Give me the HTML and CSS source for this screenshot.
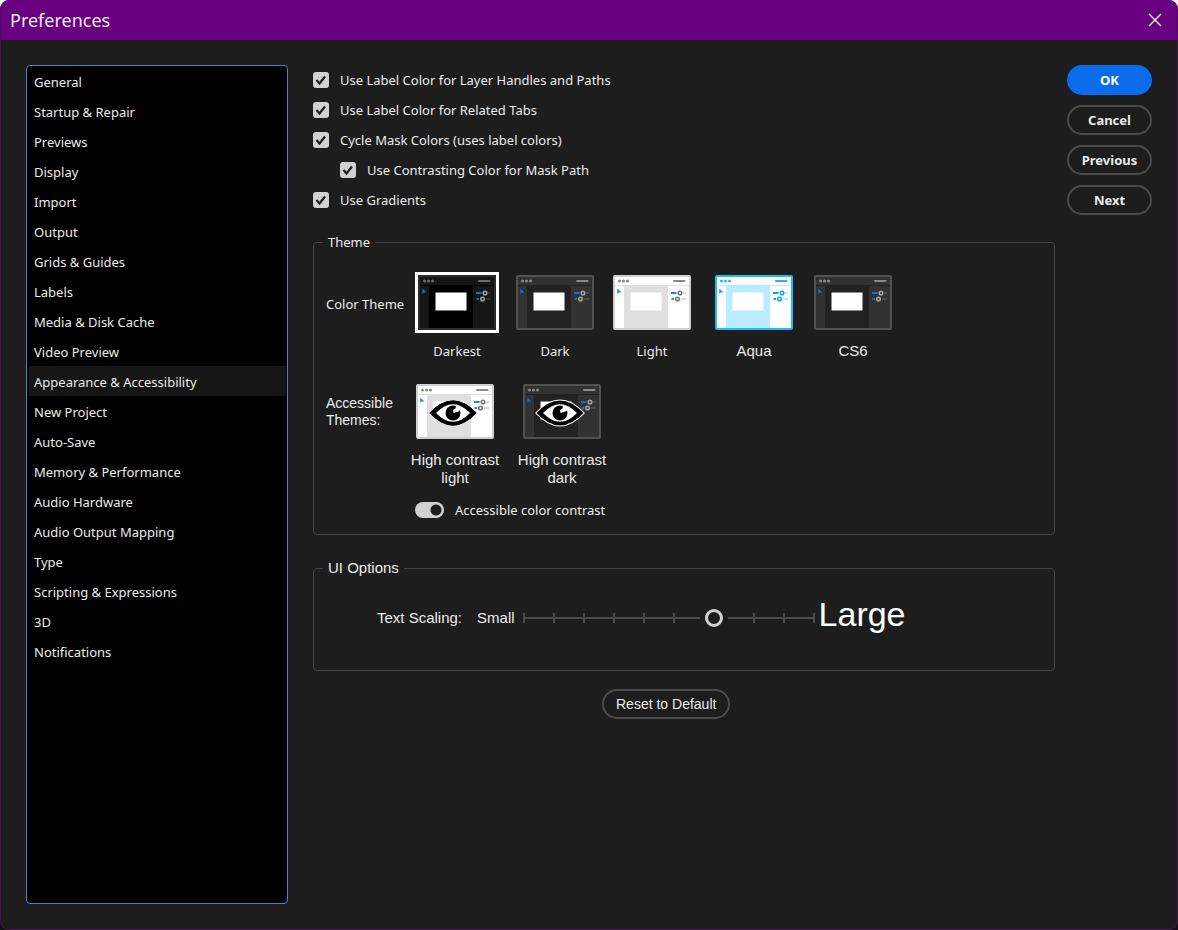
FILE: index.html
```html
<!DOCTYPE html>
<html lang="en">
<head>
    <meta charset="UTF-8">
    <meta name="viewport" content="width=device-width, initial-scale=1.0">
    <title>Preferences</title>
    <link rel="stylesheet" href="styles.css">
</head>
<body>

    <!-- shared drawings, coloured by the theme-* classes -->
    <svg class="defs" width="0" height="0" aria-hidden="true">
        <symbol id="preview" viewBox="0 0 78 55">
            <rect class="p-frame" x="1" y="1" width="76" height="53" rx="1" stroke-width="2"/>
            <rect class="p-canvas" x="11" y="11" width="44" height="42"/>
            <path class="p-split" d="M2 10.5h74"/>
            <g class="p-dots">
                <circle cx="6.500" cy="6" r="1.500"/>
                <circle cx="10.500" cy="6" r="1.500"/>
                <circle cx="14.500" cy="6" r="1.500"/>
                <rect x="60" y="5" width="12.500" height="2" rx="1"/>
                <rect x="70" y="17.500" width="3" height="1" opacity=".6"/>
                <rect x="68" y="23.500" width="5" height="1" opacity=".6"/>
            </g>
            <rect class="p-page" x="17" y="17" width="32" height="19" stroke-width="1"/>
            <g class="p-blue">
                <path d="M4.300 13.500v5.500l1.500-1.500h2.700z"/>
                <rect x="58" y="17" width="5.500" height="2"/>
                <rect x="58.500" y="23" width="2.500" height="2"/>
            </g>
            <circle class="p-knob" cx="67" cy="18" r="1.800"/>
            <circle class="p-knob" cx="64.500" cy="24" r="1.800"/>
        </symbol>
        <symbol id="eye" viewBox="0 0 78 55">
            <path class="eye-halo" d="M13.500 29q23.500-25 47 0q-23.500 25-47 0z"/>
            <path fill="#000" d="M13.500 29q23.500-25 47 0q-23.500 25-47 0z"/>
            <path fill="#fff" d="M20 29q17-17.500 34 0q-17 17.500-34 0z"/>
            <circle cx="37" cy="29" r="7.500"/>
            <path fill="#fff" d="M37.500 29l-.5-3 2.500-1.500.5-4 5.500 4.500-3 2.500z"/>
        </symbol>
        <symbol id="tick" viewBox="0 0 16 16">
            <path d="M3.500 8l3 3.500L12 4.500" fill="none" stroke="#1d1d1d" stroke-width="2.200"/>
        </symbol>
    </svg>

    <div class="dialog">
        <header class="titlebar">
            <h1>Preferences</h1>
            <button class="close" type="button" aria-label="Close">
                <svg width="14" height="14" viewBox="0 0 14 14"><path d="M1 1l12 12M13 1L1 13" stroke="#fff" stroke-width="1.300"/></svg>
            </button>
        </header>

        <div class="content">
            <nav class="sidebar">
                <a href="#">General</a>
                <a href="#">Startup &amp; Repair</a>
                <a href="#">Previews</a>
                <a href="#">Display</a>
                <a href="#">Import</a>
                <a href="#">Output</a>
                <a href="#">Grids &amp; Guides</a>
                <a href="#">Labels</a>
                <a href="#">Media &amp; Disk Cache</a>
                <a href="#">Video Preview</a>
                <a href="#" class="selected" aria-current="page">Appearance &amp; Accessibility</a>
                <a href="#">New Project</a>
                <a href="#">Auto-Save</a>
                <a href="#">Memory &amp; Performance</a>
                <a href="#">Audio Hardware</a>
                <a href="#">Audio Output Mapping</a>
                <a href="#">Type</a>
                <a href="#">Scripting &amp; Expressions</a>
                <a href="#">3D</a>
                <a href="#">Notifications</a>
            </nav>

            <main class="panel">
                <div class="options">
                    <label class="option"><span class="check"><input type="checkbox" checked><svg><use href="#tick"/></svg></span>Use Label Color for Layer Handles and Paths</label>
                    <label class="option"><span class="check"><input type="checkbox" checked><svg><use href="#tick"/></svg></span>Use Label Color for Related Tabs</label>
                    <label class="option"><span class="check"><input type="checkbox" checked><svg><use href="#tick"/></svg></span>Cycle Mask Colors (uses label colors)</label>
                    <label class="option nested"><span class="check"><input type="checkbox" checked><svg><use href="#tick"/></svg></span>Use Contrasting Color for Mask Path</label>
                    <label class="option"><span class="check"><input type="checkbox" checked><svg><use href="#tick"/></svg></span>Use Gradients</label>
                </div>

                <fieldset class="group theme-group">
                    <legend>Theme</legend>
                    <div class="theme-row">
                        <span class="row-name">Color Theme</span>
                        <div class="themes">
                            <label class="theme theme-darkest"><input type="radio" name="theme" checked><svg class="preview"><use href="#preview"/></svg>Darkest</label>
                            <label class="theme theme-dark"><input type="radio" name="theme"><svg class="preview"><use href="#preview"/></svg>Dark</label>
                            <label class="theme theme-light"><input type="radio" name="theme"><svg class="preview"><use href="#preview"/></svg>Light</label>
                            <label class="theme theme-aqua arial"><input type="radio" name="theme"><svg class="preview"><use href="#preview"/></svg>Aqua</label>
                            <label class="theme theme-dark arial"><input type="radio" name="theme"><svg class="preview"><use href="#preview"/></svg>CS6</label>
                        </div>
                    </div>
                    <div class="theme-row accessible">
                        <span class="row-name">Accessible Themes:</span>
                        <div class="themes arial">
                            <label class="theme theme-light"><input type="radio" name="theme"><svg class="preview"><use href="#preview"/><use href="#eye"/></svg>High contrast<br>light</label>
                            <label class="theme theme-dark"><input type="radio" name="theme"><svg class="preview"><use href="#preview"/><use href="#eye"/></svg>High contrast<br>dark</label>
                        </div>
                    </div>
                    <label class="switch-row">
                        <input class="switch" type="checkbox" role="switch" checked>
                        Accessible color contrast
                    </label>
                </fieldset>

                <fieldset class="group ui-group arial">
                    <legend>UI Options</legend>
                    <div class="scaling">
                        <label for="scale">Text Scaling:</label>
                        <span class="small">Small</span>
                        <div class="slider">
                            <svg width="292" height="12" viewBox="0 0 292 12"><path d="M1 6h290M1 1v10M31 1v10M61 1v10M91 1v10M121 1v10M151 1v10M231 1v10M261 1v10M291 1v10" stroke="#4b4b4b" stroke-width="2"/></svg>
                            <input id="scale" type="range" min="0" max="29" value="19">
                        </div>
                        <span class="large">Large</span>
                    </div>
                </fieldset>

                <button class="btn reset" type="button">Reset to Default</button>
            </main>

            <div class="actions">
                <button class="btn primary" type="button">OK</button>
                <button class="btn" type="button">Cancel</button>
                <button class="btn" type="button">Previous</button>
                <button class="btn" type="button">Next</button>
            </div>
        </div>
    </div>

</body>
</html>
```

FILE: styles.css
```css
* {
    box-sizing: border-box;
}
html {
    background: linear-gradient(#eeeeee 50%, #111111 50%);
}
body {
    margin: 0;
    color: #ebebeb;
    font: 13px/18px "Noto Sans", sans-serif;
}
.defs {
    display: block;
}
.arial {
    font-family: "Liberation Sans", Arial, sans-serif;
    font-size: 15px;
}
.dialog {
    display: flex;
    flex-direction: column;
    min-height: 100vh;
    background-color: #1d1d1d;
    border: 1px solid #4a1259;
    border-top: 0;
    border-radius: 9px;
    overflow: hidden;
}
.titlebar {
    display: flex;
    align-items: center;
    justify-content: space-between;
    height: 40px;
    margin: 0 -1px;
    padding: 0 16px 0 10px;
    background-color: #68007f;
}
.titlebar h1 {
    margin: 0;
    font-size: 18px;
    font-weight: 400;
    line-height: 40px;
}
.close {
    display: flex;
    padding: 0;
    border: 0;
    background: none;
}
.content {
    flex: 1;
    display: grid;
    grid-template-columns: 262px 1fr 85px;
    padding: 25px;
}
.sidebar {
    padding: 0 1px 0 2px;
    background-color: #000;
    border: 1px solid #4285cb;
    border-radius: 4px;
}
.sidebar a {
    display: block;
    height: 30px;
    padding: 0 5px;
    color: inherit;
    line-height: 32px;
    text-decoration: none;
}
.sidebar .selected {
    background-color: #161616;
}
.panel {
    display: flex;
    flex-direction: column;
    margin: 0 12px 0 25px;
}

/* checkboxes */
.option {
    display: flex;
    align-items: center;
    gap: 11px;
    height: 30px;
}
.nested {
    margin-left: 27px;
}
.check {
    display: grid;
}
.check input, .check svg {
    grid-area: 1 / 1;
    width: 16px;
    height: 16px;
    margin: 0;
}
.check input {
    appearance: none;
    background-color: #d1d1d1;
    border-radius: 3px;
}
.check svg {
    pointer-events: none;
}

/* framed groups */
.group {
    min-width: 0;
    margin: 0;
    padding: 0 12px;
    border: 1px solid #464646;
    border-radius: 4px;
}
.group legend {
    margin-left: -3px;
    padding: 0 5px;
}
.theme-group {
    height: 302px;
    margin-top: 18px;
}
.ui-group {
    height: 112px;
    margin-top: 24px;
}
.theme-row {
    display: grid;
    grid-template-columns: 81px 1fr;
    padding-top: 24px;
}
.row-name {
    padding-top: 20px;
    white-space: nowrap;
}
.themes {
    display: grid;
    grid-template-columns: 100px 96px 98px 106px 92px;
}
.theme {
    display: flex;
    flex-direction: column;
    align-items: center;
    text-align: center;
}
.theme input {
    appearance: none;
    margin: 0;
}
.preview {
    width: 78px;
    height: 55px;
    margin-bottom: 12px;
}
.theme input:checked + .preview {
    outline: 3px solid #fff;
}
.accessible .themes {
    grid-template-columns: 96px 118px;
}
.accessible .row-name {
    padding-top: 11px;
    font-family: "Liberation Sans", Arial, sans-serif;
    font-size: 14px;
    line-height: 17px;
    white-space: normal;
}
.theme-darkest {
    --frame: #2c2c2c;
    --bar: #161616;
    --canvas: #000;
    --dots: #6c6c6c;
    --blue: #1b6fc4;
    --knob: #a5a5a5;
}
.theme-dark {
    --frame: #515151;
    --bar: #323232;
    --canvas: #222222;
    --dots: #8a8a8a;
    --blue: #1b6fc4;
    --knob: #a5a5a5;
    --halo: #fff;
}
.theme-light {
    --frame: #d0d0d0;
    --bar: #fff;
    --canvas: #dfdfdf;
    --dots: #8a8a8a;
    --blue: #2f7be0;
    --knob: #747474;
}
.theme-aqua {
    --frame: #1cbcf5;
    --bar: #fff;
    --canvas: #b9ecff;
    --dots: #27b5ea;
    --blue: #12a4e0;
    --knob: #12a4e0;
}
.p-frame {
    fill: var(--bar);
    stroke: var(--frame);
}
.p-canvas {
    fill: var(--canvas);
}
.p-split {
    stroke: var(--canvas);
}
.p-dots {
    fill: var(--dots);
}
.p-page {
    fill: #fff;
    stroke: var(--canvas);
}
.p-blue {
    fill: var(--blue);
}
.p-knob {
    fill: none;
    stroke: var(--knob);
    stroke-width: 1.5px;
}
.eye-halo {
    stroke: var(--halo, none);
    stroke-width: 2px;
}

/* switch */
.switch-row {
    display: flex;
    align-items: center;
    gap: 11px;
    margin: 14px 0 0 89px;
}
.switch {
    appearance: none;
    width: 29px;
    height: 16px;
    margin: 0;
    border-radius: 8px;
    background: radial-gradient(circle at 21px 8px, #1d1d1d 5px, #d1d1d1 6px);
}

/* text size slider */
.scaling {
    display: flex;
    align-items: center;
    padding: 17px 0 0 51px;
}
.scaling label {
    margin-right: 15px;
}
.slider {
    display: grid;
    align-items: center;
    justify-items: center;
}
.slider svg, .slider input {
    grid-area: 1 / 1;
}
.slider input {
    appearance: none;
    width: 308px;
    margin: 0;
    background: none;
}
.slider input::-webkit-slider-thumb {
    appearance: none;
    width: 18px;
    height: 18px;
    border: 3px solid #d1d1d1;
    border-radius: 50%;
    background-color: #1d1d1d;
    box-shadow: 0 0 0 5px #1d1d1d;
}
.large {
    margin-left: -4px;
    padding-bottom: 8px;
    color: #fff;
    font-size: 34px;
    line-height: 40px;
}

/* buttons */
.btn {
    height: 30px;
    padding: 0 12px;
    color: #ebebeb;
    font: bold 13px "Noto Sans", sans-serif;
    background: none;
    border: 2px solid #4b4b4b;
    border-radius: 15px;
}
.primary {
    color: #fff;
    background-color: #0a6ceb;
    border-color: #0a6ceb;
}
.reset {
    align-self: flex-start;
    margin: 18px 0 0 289px;
    font: 14px "Liberation Sans", Arial, sans-serif;
}
.actions {
    display: flex;
    flex-direction: column;
    gap: 10px;
}
```
